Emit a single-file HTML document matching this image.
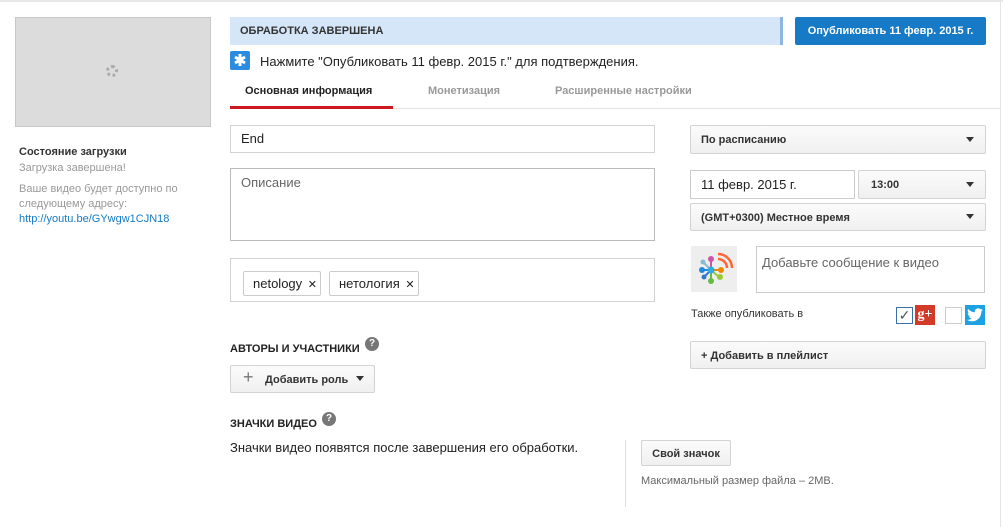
<!DOCTYPE html>
<html><head><meta charset="utf-8"><style>
*{box-sizing:border-box;margin:0;padding:0}
body{width:1003px;height:527px;background:#fff;font-family:"Liberation Sans",Arial,sans-serif;position:relative;overflow:hidden;color:#222}
.a{position:absolute}
.box{position:absolute;border:1px solid #d3d3d3;background:#fff}
.btn{position:absolute;border:1px solid #d3d3d3;border-radius:2px;background:linear-gradient(#fbfbfb,#f0f0f0);font-weight:bold;font-size:11px;color:#333}
.caret{position:absolute;width:0;height:0;border-left:4px solid transparent;border-right:4px solid transparent;border-top:5px solid #333}
</style></head><body>
<div class="a" style="left:0;top:0;width:1003px;height:2px;background:#e8e8e8"></div>
<div class="a" style="left:1000px;top:0;width:1px;height:527px;background:#e5e5e5"></div>
<div class="a" style="left:15px;top:17px;width:196px;height:110px;background:#dcdcdc;border:1px solid #c8c8c8"></div>
<div class="a" style="left:106px;top:65px;width:12px;height:12px;border:3px dotted #aaa;border-radius:50%"></div>
<div class="a" style="left:19px;top:146px;font-size:11px;font-weight:bold;color:#333">Состояние загрузки</div>
<div class="a" style="left:19px;top:162px;font-size:11px;color:#999">Загрузка завершена!</div>
<div class="a" style="left:19px;top:182px;font-size:11px;color:#999;line-height:15px">Ваше видео будет доступно по<br>следующему адресу:<br><span style="color:#167ac6">http://youtu.be/GYwgw1CJN18</span></div>

<div class="a" style="left:230px;top:17px;width:553px;height:28px;background:#d5e6f8;border-right:3px solid #8fb6e0"></div>
<div class="a" style="left:240px;top:25px;font-size:11px;font-weight:bold;color:#333">ОБРАБОТКА ЗАВЕРШЕНА</div>
<div class="a" style="left:795px;top:17px;width:191px;height:28px;background:#167ac6;border-radius:2px;color:#fff;font-size:11px;font-weight:bold;line-height:28px;text-align:center">Опубликовать 11 февр. 2015 г.</div>
<div class="a" style="left:230px;top:51px;width:20px;height:19px;background:#2b8ce0;border-radius:2px"></div>
<svg class="a" style="left:234px;top:54px" width="12" height="12"><g stroke="#fff" stroke-width="3"><line x1="6" y1="0" x2="6" y2="12"/><line x1="1" y1="3" x2="11" y2="9"/><line x1="1" y1="9" x2="11" y2="3"/></g></svg>
<div class="a" style="left:260px;top:54px;font-size:13px;color:#222">Нажмите "Опубликовать 11 февр. 2015 г." для подтверждения.</div>
<div class="a" style="left:245px;top:85px;font-size:11px;font-weight:bold;color:#222">Основная информация</div>
<div class="a" style="left:428px;top:85px;font-size:11px;font-weight:bold;color:#999">Монетизация</div>
<div class="a" style="left:555px;top:85px;font-size:11px;font-weight:bold;color:#999">Расширенные настройки</div>
<div class="a" style="left:230px;top:108px;width:770px;height:1px;background:#e2e2e2"></div>
<div class="a" style="left:230px;top:106px;width:163px;height:3px;background:#cc181e"></div>

<div class="box" style="left:230px;top:125px;width:425px;height:28px"></div>
<div class="a" style="left:241px;top:131px;font-size:13px">End</div>
<div class="box" style="left:230px;top:168px;width:425px;height:73px;border-color:#bbb"></div>
<div class="a" style="left:241px;top:175px;font-size:13px;color:#666">Описание</div>
<div class="box" style="left:230px;top:258px;width:425px;height:44px"></div>
<div class="a" style="left:243px;top:271px;width:78px;height:25px;border:1px solid #ccc;border-radius:2px;font-size:13px;line-height:23px;padding-left:9px">netology <span style="font-size:11px;margin-left:2px">✕</span></div>
<div class="a" style="left:329px;top:271px;width:90px;height:25px;border:1px solid #ccc;border-radius:2px;font-size:13px;line-height:23px;padding-left:9px">нетология <span style="font-size:11px;margin-left:2px">✕</span></div>

<div class="a" style="left:230px;top:343px;font-size:11px;font-weight:bold;color:#222">АВТОРЫ И УЧАСТНИКИ</div>
<div class="a" style="left:365px;top:337px;width:14px;height:14px;border-radius:50%;background:#777;color:#fff;font-size:10px;font-weight:bold;text-align:center;line-height:14px">?</div>
<div class="btn" style="left:230px;top:365px;width:145px;height:28px;line-height:28px;padding-left:34px">Добавить роль</div>
<div class="a" style="left:243px;top:367px;font-size:18px;color:#777">+</div>
<div class="caret" style="left:356px;top:376px"></div>
<div class="a" style="left:230px;top:418px;font-size:11px;font-weight:bold;color:#222">ЗНАЧКИ ВИДЕО</div>
<div class="a" style="left:322px;top:412px;width:14px;height:14px;border-radius:50%;background:#777;color:#fff;font-size:10px;font-weight:bold;text-align:center;line-height:14px">?</div>
<div class="a" style="left:230px;top:440px;font-size:13px;color:#222">Значки видео появятся после завершения его обработки.</div>
<div class="a" style="left:625px;top:440px;width:1px;height:67px;background:#ddd"></div>
<div class="btn" style="left:641px;top:440px;width:90px;height:26px;line-height:26px;text-align:center">Свой значок</div>
<div class="a" style="left:641px;top:475px;font-size:11px;color:#666">Максимальный размер файла – 2MB.</div>

<div class="btn" style="left:690px;top:125px;width:296px;height:29px;line-height:29px;padding-left:10px">По расписанию</div>
<div class="caret" style="left:966px;top:137px"></div>
<div class="box" style="left:690px;top:170px;width:165px;height:29px;border-color:#ccc"></div>
<div class="a" style="left:701px;top:177px;font-size:13px">11 февр. 2015 г.</div>
<div class="btn" style="left:858px;top:170px;width:128px;height:29px;line-height:29px;padding-left:12px">13:00</div>
<div class="caret" style="left:966px;top:182px"></div>
<div class="btn" style="left:690px;top:203px;width:296px;height:28px;line-height:28px;padding-left:10px">(GMT+0300) Местное время</div>
<div class="caret" style="left:966px;top:214px"></div>
<div class="a" style="left:691px;top:246px;width:46px;height:46px;background:#eee"></div>
<svg class="a" style="left:691px;top:246px" width="46" height="46">
<g stroke-width="2"><line x1="20" y1="24" x2="12" y2="16" stroke="#8bc"/><line x1="20" y1="24" x2="20" y2="14" stroke="#c5a"/><line x1="20" y1="24" x2="11" y2="24" stroke="#28d"/><line x1="20" y1="24" x2="13" y2="31" stroke="#37c"/><line x1="20" y1="24" x2="20" y2="34" stroke="#6b4"/><line x1="20" y1="24" x2="28" y2="31" stroke="#9c3"/><line x1="20" y1="24" x2="29" y2="24" stroke="#e80"/></g>
<circle cx="20" cy="24" r="3.5" fill="#3ad"/><circle cx="20" cy="13" r="3" fill="#c5a"/><circle cx="11" cy="24" r="3" fill="#28d"/><circle cx="12" cy="16" r="2.5" fill="#8bc"/><circle cx="13" cy="31" r="2.5" fill="#37c"/><circle cx="20" cy="35" r="3" fill="#6b4"/><circle cx="29" cy="31" r="3" fill="#9c3"/><circle cx="30" cy="24" r="3" fill="#e80"/>
<path d="M27 13a9 9 0 0 1 9 9M27 8a14 14 0 0 1 14 14" fill="none" stroke="#f63" stroke-width="2.5"/></svg>
<div class="box" style="left:756px;top:246px;width:229px;height:47px;border-color:#ccc"></div>
<div class="a" style="left:762px;top:255px;font-size:13px;color:#666">Добавьте сообщение к видео</div>
<div class="a" style="left:691px;top:308px;font-size:11px;color:#333">Также опубликовать в</div>
<div class="a" style="left:896px;top:307px;width:17px;height:17px;border:1px solid #3a6ea5;color:#555;font-size:14px;line-height:15px;text-align:center">✓</div>
<div class="a" style="left:915px;top:305px;width:20px;height:20px;background:#d33b29;color:#fff;font-size:14px;font-weight:bold;text-align:center;line-height:20px;font-family:'Liberation Serif',serif">g+</div>
<div class="a" style="left:945px;top:307px;width:17px;height:17px;border:1px solid #ccc"></div>
<div class="a" style="left:965px;top:305px;width:20px;height:20px;background:#1da1e2"></div>
<svg class="a" style="left:967px;top:308px" width="16" height="14" viewBox="0 0 24 20"><path fill="#fff" d="M24 2.4a10 10 0 0 1-2.8.8A5 5 0 0 0 23.3.4a10 10 0 0 1-3.1 1.2A4.9 4.9 0 0 0 11.8 6 14 14 0 0 1 1.7.9a4.9 4.9 0 0 0 1.5 6.6A4.9 4.9 0 0 1 1 6.9a4.9 4.9 0 0 0 3.9 4.9 5 5 0 0 1-2.2.1 4.9 4.9 0 0 0 4.6 3.4A9.9 9.9 0 0 1 0 17.3 14 14 0 0 0 7.5 19.5c9.1 0 14-7.5 14-14v-.6A10 10 0 0 0 24 2.4z"/></svg>
<div class="btn" style="left:690px;top:341px;width:296px;height:28px;line-height:28px;padding-left:10px">+ Добавить в плейлист</div>
</body></html>
